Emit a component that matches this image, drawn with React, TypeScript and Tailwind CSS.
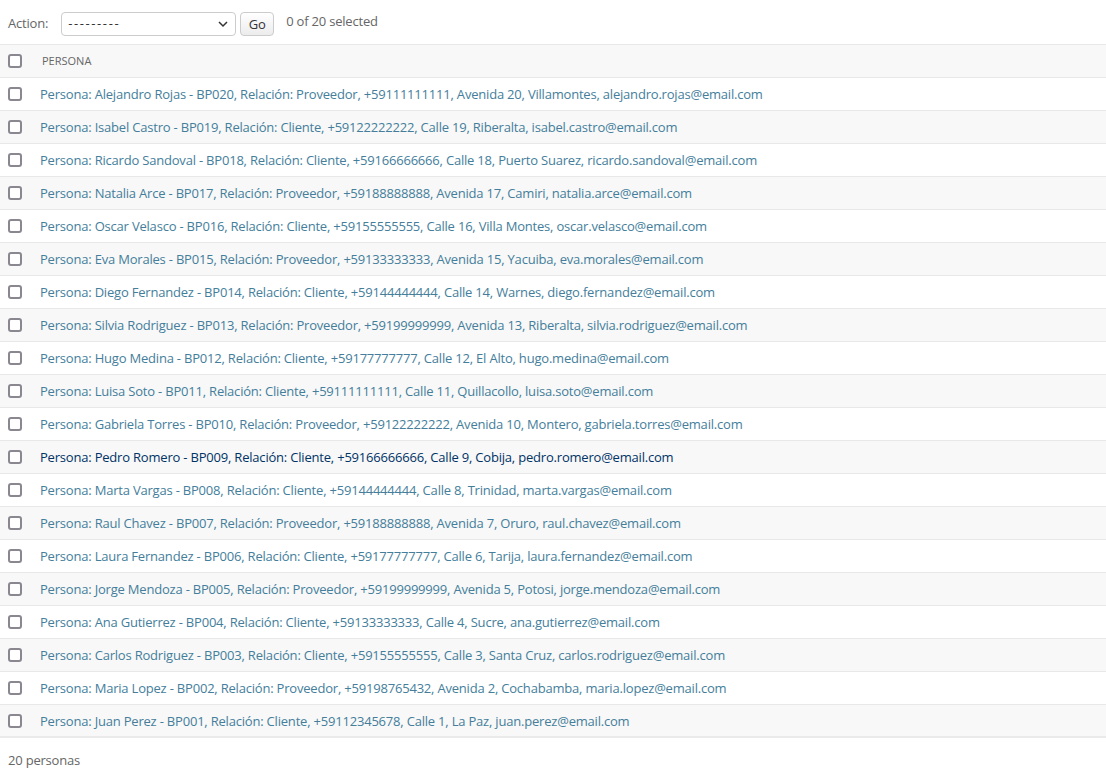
import React from 'react';

const ROWS = [
  'Alejandro Rojas - BP020, Relación: Proveedor, +59111111111, Avenida 20, Villamontes, alejandro.rojas@email.com',
  'Isabel Castro - BP019, Relación: Cliente, +59122222222, Calle 19, Riberalta, isabel.castro@email.com',
  'Ricardo Sandoval - BP018, Relación: Cliente, +59166666666, Calle 18, Puerto Suarez, ricardo.sandoval@email.com',
  'Natalia Arce - BP017, Relación: Proveedor, +59188888888, Avenida 17, Camiri, natalia.arce@email.com',
  'Oscar Velasco - BP016, Relación: Cliente, +59155555555, Calle 16, Villa Montes, oscar.velasco@email.com',
  'Eva Morales - BP015, Relación: Proveedor, +59133333333, Avenida 15, Yacuiba, eva.morales@email.com',
  'Diego Fernandez - BP014, Relación: Cliente, +59144444444, Calle 14, Warnes, diego.fernandez@email.com',
  'Silvia Rodriguez - BP013, Relación: Proveedor, +59199999999, Avenida 13, Riberalta, silvia.rodriguez@email.com',
  'Hugo Medina - BP012, Relación: Cliente, +59177777777, Calle 12, El Alto, hugo.medina@email.com',
  'Luisa Soto - BP011, Relación: Cliente, +59111111111, Calle 11, Quillacollo, luisa.soto@email.com',
  'Gabriela Torres - BP010, Relación: Proveedor, +59122222222, Avenida 10, Montero, gabriela.torres@email.com',
  'Pedro Romero - BP009, Relación: Cliente, +59166666666, Calle 9, Cobija, pedro.romero@email.com',
  'Marta Vargas - BP008, Relación: Cliente, +59144444444, Calle 8, Trinidad, marta.vargas@email.com',
  'Raul Chavez - BP007, Relación: Proveedor, +59188888888, Avenida 7, Oruro, raul.chavez@email.com',
  'Laura Fernandez - BP006, Relación: Cliente, +59177777777, Calle 6, Tarija, laura.fernandez@email.com',
  'Jorge Mendoza - BP005, Relación: Proveedor, +59199999999, Avenida 5, Potosi, jorge.mendoza@email.com',
  'Ana Gutierrez - BP004, Relación: Cliente, +59133333333, Calle 4, Sucre, ana.gutierrez@email.com',
  'Carlos Rodriguez - BP003, Relación: Cliente, +59155555555, Calle 3, Santa Cruz, carlos.rodriguez@email.com',
  'Maria Lopez - BP002, Relación: Proveedor, +59198765432, Avenida 2, Cochabamba, maria.lopez@email.com',
  'Juan Perez - BP001, Relación: Cliente, +59112345678, Calle 1, La Paz, juan.perez@email.com',
];

// fila con el cursor encima (texto oscuro)
const HOVERED = 11;

function Check() {
  return (
    <input
      type="checkbox"
      className="m-0 block h-[14px] w-[14px] appearance-none rounded-[3px] border-2 border-[#8b8791] bg-white"
    />
  );
}

export default function App() {
  return (
    <div
      className="min-h-screen bg-white text-[13px] tracking-[-0.2px] text-[#333]"
      style={{ fontFamily: '"Open Sans", "Noto Sans", sans-serif' }}
    >
      {/* action bar */}
      <div className="flex h-[44px] items-center pl-2 pt-[1px] text-[#666]">
        <span className="mt-[2px]">Action:</span>
        <div className="relative ml-[13px] mt-[2px]">
          <select className="h-[24px] w-[175px] appearance-none rounded-[4px] border border-[#ccc] bg-white pl-[6px] pr-6 text-[13px] tracking-[1.6px] text-[#333]">
            <option>---------</option>
          </select>
          <svg
            className="pointer-events-none absolute right-[8px] top-[9px]"
            width="10"
            height="7"
            viewBox="0 0 10 7"
            fill="none"
            stroke="#333"
            strokeWidth="1.5"
          >
            <path d="M1 1l4 4 4-4" />
          </svg>
        </div>
        <button
          type="button"
          className="ml-1 mt-[2px] h-[24px] w-[34px] rounded-[4px] border border-[#ccc] bg-gradient-to-b from-white to-[#ececec] pt-[2px] text-[13px] text-[#333]"
        >
          Go
        </button>
        <span className="ml-3 -mt-[2px]">0 of 20 selected</span>
      </div>

      {/* table */}
      <div className="border-t border-[#e8e8e8]">
        <div className="flex h-[33px] items-center border-b border-[#e8e8e8] bg-[#f8f8f8]">
          <div className="w-[40px] pl-[8px]">
            <Check />
          </div>
          <div className="pl-[2px] text-[11px] uppercase tracking-normal text-[#666]">Persona</div>
        </div>
        {ROWS.map((r, i) => (
          <div
            key={r}
            className={
              'flex h-[33px] items-center ' +
              (i === ROWS.length - 1 ? 'border-b-2 border-[#eaeaea] ' : 'border-b border-[#e8e8e8] ') +
              (i % 2 === 1 ? 'bg-[#f8f8f8]' : 'bg-white')
            }
          >
            <div className="w-[40px] pl-[8px]">
              <Check />
            </div>
            <a
              href="#"
              className={
                'whitespace-nowrap pt-[2px] ' + (i === HOVERED ? 'text-[#003366]' : 'text-[#447e9b]')
              }
            >
              Persona: {r}
            </a>
          </div>
        ))}
      </div>

      {/* footer */}
      <div className="flex h-[44px] items-center border-b border-[#eee] pl-2 pt-[2px] text-[#666]">
        20 personas
      </div>
    </div>
  );
}
